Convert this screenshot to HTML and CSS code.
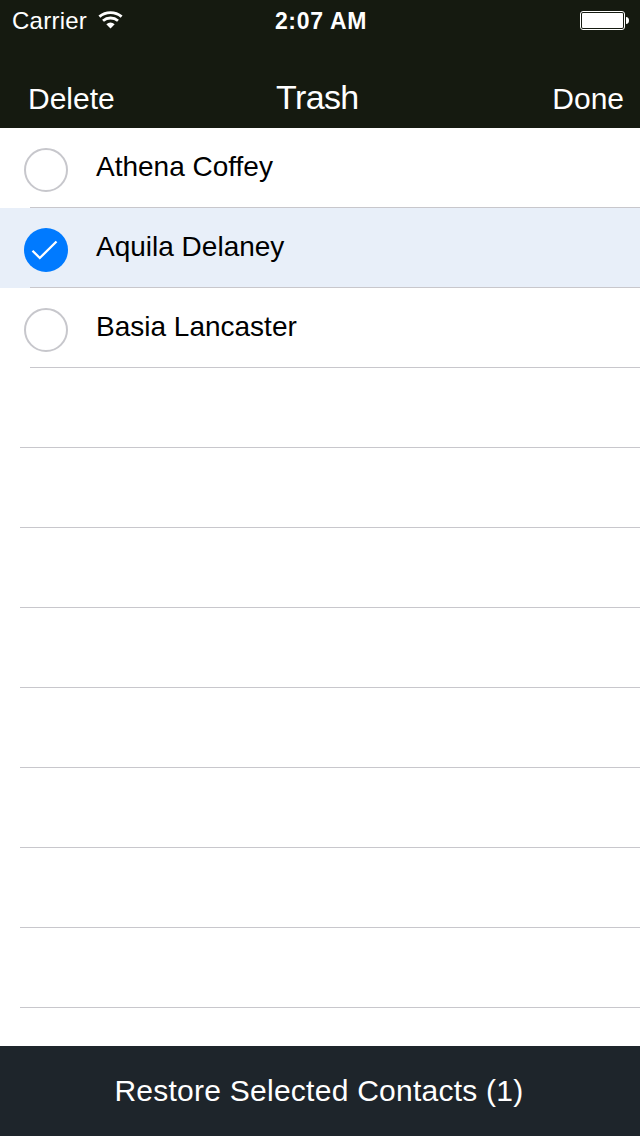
FILE: index.html
```html
<!DOCTYPE html>
<html lang="en">
<head>
<meta charset="utf-8">
<title>Trash</title>
<link rel="stylesheet" href="styles.css">
</head>
<body>
<div class="screen">
  <header class="header">
    <div class="status">
      <div class="status-left">
        <span class="carrier">Carrier</span>
        <svg class="wifi" width="26" height="20" viewBox="0 0 26 20" fill="none" stroke="#fff">
          <path d="M1.4 6.6A17.5 17.5 0 0 1 23.6 6.6" stroke-width="2.9"/>
          <path d="M5 10.8A11.5 11.5 0 0 1 20 10.8" stroke-width="2.8"/>
          <path d="M8.3 14.2A6.8 6.8 0 0 1 16.7 14.2L12.5 18.4Z" fill="#fff" stroke="none"/>
        </svg>
      </div>
      <span class="clock">2:07 AM</span>
      <svg class="battery" width="50" height="20" viewBox="0 0 50 20">
        <rect x=".5" y=".5" width="44" height="18" rx="2.5" fill="none" stroke="#fff"/>
        <rect x="2" y="2" width="41" height="15" rx="1" fill="#fff"/>
        <path d="M46 6q3 .3 3 3.5t-3 3.5z" fill="#fff"/>
      </svg>
    </div>
    <nav class="nav">
      <span class="action delete">Delete</span>
      <h1 class="title">Trash</h1>
      <span class="action done">Done</span>
    </nav>
  </header>
  <main class="list">
    <div class="row contact">
      <span class="check"></span>
      <div class="cell"><span class="name">Athena Coffey</span></div>
    </div>
    <div class="row contact selected">
      <span class="check checked">
        <svg width="44" height="44" viewBox="0 0 44 44" fill="none" stroke="#fff" stroke-width="2.3"><path d="M8.5 22.7L15.8 30L32.5 13.5"/></svg>
      </span>
      <div class="cell"><span class="name">Aquila Delaney</span></div>
    </div>
    <div class="row contact">
      <span class="check"></span>
      <div class="cell"><span class="name">Basia Lancaster</span></div>
    </div>
    <div class="row empty"></div>
    <div class="row empty"></div>
    <div class="row empty"></div>
    <div class="row empty"></div>
    <div class="row empty"></div>
    <div class="row empty"></div>
    <div class="row empty"></div>
    <div class="row empty"></div>
  </main>
  <footer class="restore"><span class="restore-label">Restore Selected Contacts (1)</span></footer>
</div>
</body>
</html>
```
FILE: styles.css
```css
* { box-sizing: border-box; }
body {
  margin: 0;
  background: #fff;
  font-family: "Liberation Sans", Arial, sans-serif;
  color: #000;
}
.screen {
  width: 640px;
  height: 1136px;
  display: flex;
  flex-direction: column;
  overflow: hidden;
}
.header {
  height: 128px;
  flex: none;
  background: #151a10;
  color: #fff;
}
.status {
  height: 41px;
  padding: 0 10px 0 12px;
  display: grid;
  grid-template-columns: 1fr auto 1fr;
  font-size: 24px;
  line-height: 41px;
}
.status-left { display: flex; gap: 11px; }
.carrier { letter-spacing: .25px; }
.wifi { margin-top: 10px; }
.clock {
  font-weight: bold;
  font-size: 23px;
  line-height: 43px;
  letter-spacing: .7px;
}
.battery { justify-self: end; margin-top: 11px; }
.nav {
  height: 87px;
  padding: 36px 16px 0 28px;
  display: grid;
  grid-template-columns: 248px auto 1fr;
  align-items: baseline;
  font-size: 30px;
  line-height: 40px;
}
.done { justify-self: end; }
.title {
  margin: 0;
  font-size: 34px;
  font-weight: normal;
  letter-spacing: -.6px;
}
.list { flex: 1; min-height: 0; }
.row { height: 80px; }
.contact {
  display: flex;
  padding-left: 24px;
  background: linear-gradient(#c8c7cc, #c8c7cc) 30px 79px / 100% 1px no-repeat;
}
.selected { background-color: #e8eff9; }
.check {
  width: 44px;
  height: 44px;
  flex: none;
  margin-top: 20px;
  border: 2px solid #c7c7cc;
  border-radius: 50%;
}
.checked { border: 0; background: #007aff; }
.checked svg { display: block; }
.cell {
  padding-left: 28px;
  font-size: 28px;
  line-height: 77px;
}
.empty {
  margin-left: 20px;
  border-bottom: 1px solid #c8c7cc;
}
.restore {
  height: 90px;
  flex: none;
  display: flex;
  justify-content: center;
  padding-right: 2px;
  background: #1e252b;
  color: #fff;
  font-size: 30px;
  line-height: 90px;
  letter-spacing: .25px;
}
```
